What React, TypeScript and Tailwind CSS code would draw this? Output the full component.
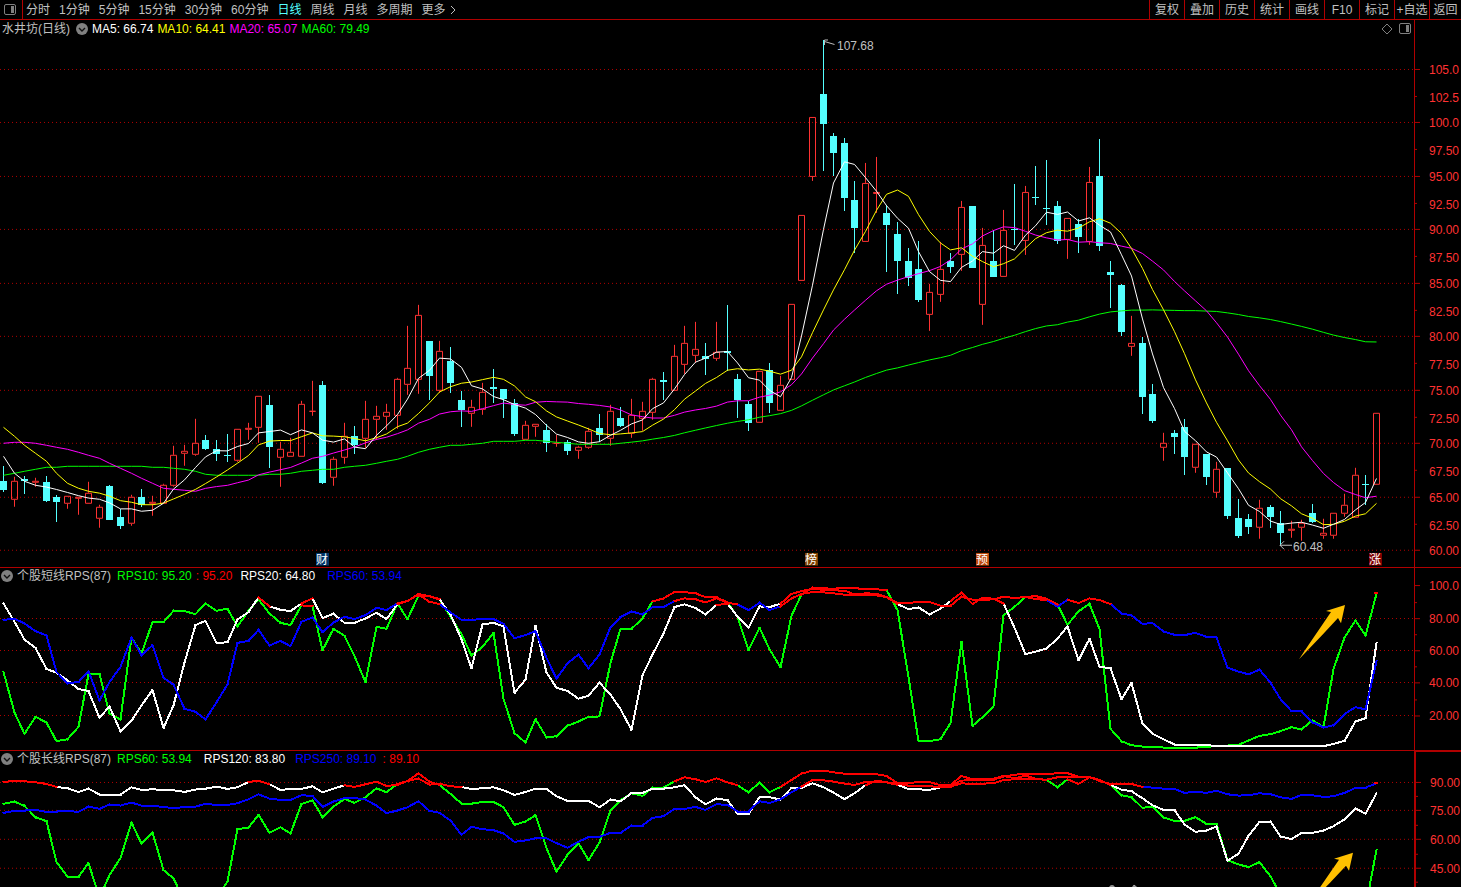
import React from 'react';

type Candle = [kind: 'u' | 'd', high: number, top: number, bottom: number, low: number];

const CHART_WIDTH = 1414;

const candles: Candle[] = [
    ['d', 466, 481, 490, 492], ['u', 477, 481, 500, 507], ['d', 476, 479, 481, 494], ['u', 478, 481, 483, 487],
    ['d', 476, 482, 501, 502], ['d', 495, 497, 502, 522], ['u', 496, 496, 504, 509], ['u', 497, 497, 499, 515],
    ['u', 482, 493, 504, 504], ['u', 505, 507, 519, 528], ['d', 485, 486, 520, 520], ['d', 509, 517, 526, 529],
    ['u', 495, 497, 524, 526], ['d', 489, 497, 505, 507], ['u', 496, 502, 504, 516], ['u', 484, 485, 504, 504],
    ['u', 446, 455, 486, 487], ['u', 445, 451, 454, 466], ['u', 419, 443, 455, 456], ['d', 435, 440, 449, 450],
    ['d', 440, 449, 454, 461], ['d', 434, 455, 456, 462], ['u', 429, 429, 461, 462], ['u', 423, 428, 430, 440],
    ['u', 396, 396, 428, 443], ['d', 395, 405, 447, 468], ['u', 442, 449, 458, 487], ['u', 438, 452, 457, 457],
    ['u', 401, 404, 457, 457], ['u', 381, 411, 412, 416], ['d', 381, 385, 483, 484], ['u', 457, 459, 478, 486],
    ['u', 423, 436, 458, 464], ['d', 426, 436, 445, 454], ['u', 401, 419, 439, 448], ['u', 406, 416, 420, 440],
    ['u', 404, 412, 417, 430], ['u', 378, 379, 416, 429], ['u', 326, 368, 385, 395], ['u', 305, 315, 380, 394],
    ['d', 341, 341, 376, 400], ['u', 341, 351, 391, 393], ['d', 347, 361, 383, 393], ['d', 391, 400, 410, 427],
    ['u', 400, 407, 414, 427], ['u', 383, 392, 410, 415], ['d', 369, 387, 389, 403], ['d', 389, 389, 399, 418],
    ['d', 399, 403, 434, 436], ['u', 421, 425, 440, 440], ['u', 424, 424, 427, 437], ['d', 424, 430, 443, 452],
    ['u', 435, 443, 444, 447], ['d', 440, 442, 451, 455], ['u', 446, 447, 451, 459], ['u', 428, 431, 448, 449],
    ['d', 414, 428, 435, 442], ['u', 405, 411, 439, 446], ['d', 407, 418, 426, 427], ['u', 399, 415, 434, 438],
    ['u', 402, 411, 419, 431], ['u', 378, 379, 413, 420], ['d', 372, 380, 382, 400], ['u', 345, 356, 391, 391],
    ['u', 326, 343, 365, 374], ['u', 322, 349, 356, 363], ['d', 343, 356, 359, 375], ['u', 322, 352, 359, 361],
    ['d', 305, 351, 353, 371], ['d', 374, 379, 400, 418], ['d', 401, 404, 423, 431], ['u', 371, 371, 423, 423],
    ['d', 363, 370, 403, 413], ['u', 376, 385, 411, 411], ['u', 304, 304, 380, 380], ['u', 215, 215, 281, 281],
    ['u', 117, 117, 177, 181], ['d', 40, 94, 124, 171], ['d', 133, 136, 153, 176], ['d', 138, 143, 198, 211],
    ['d', 181, 200, 228, 253], ['u', 163, 183, 242, 242], ['u', 157, 192, 194, 213], ['d', 205, 213, 225, 272],
    ['d', 222, 234, 261, 294], ['d', 248, 261, 278, 286], ['d', 241, 269, 300, 302], ['u', 284, 292, 315, 331],
    ['u', 242, 269, 295, 302], ['d', 253, 261, 267, 273], ['u', 201, 207, 255, 271], ['d', 206, 206, 268, 268],
    ['u', 228, 245, 305, 325], ['d', 230, 261, 277, 277], ['u', 210, 230, 277, 277], ['d', 184, 229, 230, 245],
    ['u', 186, 192, 241, 255], ['d', 166, 197, 198, 205], ['d', 160, 208, 209, 225], ['d', 201, 206, 241, 244],
    ['u', 218, 218, 240, 259], ['d', 219, 224, 237, 253], ['u', 167, 182, 242, 245], ['d', 139, 176, 246, 251],
    ['d', 261, 272, 275, 308], ['d', 284, 285, 332, 336], ['u', 316, 343, 347, 356], ['d', 337, 343, 397, 414],
    ['d', 384, 394, 421, 423], ['u', 433, 443, 448, 461], ['d', 430, 433, 437, 454], ['d', 419, 427, 457, 475],
    ['u', 444, 444, 468, 473], ['d', 454, 454, 477, 485], ['u', 462, 469, 493, 498], ['d', 468, 468, 516, 519],
    ['d', 499, 518, 536, 538], ['d', 514, 519, 527, 534], ['u', 500, 508, 528, 539], ['d', 505, 507, 517, 528],
    ['d', 511, 523, 533, 546], ['u', 521, 529, 531, 538], ['u', 520, 523, 528, 541], ['d', 504, 513, 522, 523],
    ['u', 519, 533, 536, 539], ['u', 513, 513, 536, 539], ['u', 494, 505, 514, 517], ['u', 468, 475, 518, 518],
    ['d', 475, 484, 485, 505], ['u', 413, 413, 485, 485],
];

// averages that reach back before the first visible candle
const ma5Start = [456, 473, 481, 485];
const ma10Start = [427, 436, 445, 453, 461, 473, 483, 488, 491];
const ma20Start = [443, 442, 442, 443, 445, 447, 449, 452, 455, 458, 463, 468, 473, 478, 483, 488, 489, 490, 491];
const ma60Start = [
    475, 473, 471, 469, 467, 467, 466, 466, 466, 466, 466, 466, 466, 466, 467, 467, 468, 469, 471, 474,
    475, 475, 475, 475, 475, 474, 474, 473, 471, 470, 469, 469, 467, 466, 465, 463, 461, 459, 456, 452,
    449, 447, 445, 445, 444, 443, 441, 441, 441, 440, 440, 441, 442, 443, 444, 444, 444, 444, 443,
];

// RPS series, three units per pixel
const shortRps10 = [
    320, 441, 505, 454, 471, 527, 521, 484, 327, 327, 444, 462, 217, 265, 171, 171, 137, 138, 147, 115,
    137, 131, 184, 137, 103, 145, 173, 180, 121, 123, 255, 191, 212, 272, 351, 185, 191, 115, 162, 92,
    94, 102, 155, 207, 271, 245, 203, 400, 503, 531, 461, 516, 512, 481, 468, 454, 453, 293, 191, 191,
    160, 109, 100, 81, 81, 85, 96, 97, 112, 155, 255, 188, 252, 306, 152, 88, 68, 70, 71, 69,
    69, 73, 73, 75, 135, 335, 527, 527, 521, 473, 230, 481, 455, 422, 151, 125, 96, 93, 101, 118,
    179, 139, 116, 192, 490, 527, 539, 543, 543, 546, 546, 546, 546, 545, 540, 540, 538, 525, 511, 506,
    497, 485, 492, 464, 485, 311, 217, 166, 211, 86,
];
const shortRps20 = [
    115, 170, 223, 248, 311, 322, 345, 371, 377, 457, 423, 498, 466, 420, 374, 487, 420, 292, 180, 167,
    234, 231, 163, 141, 97, 124, 134, 138, 115, 100, 159, 146, 173, 173, 160, 143, 162, 117, 108, 87,
    94, 103, 148, 223, 309, 178, 173, 184, 382, 343, 182, 322, 367, 377, 400, 391, 352, 388, 431, 493,
    330, 268, 205, 126, 118, 129, 148, 120, 116, 154, 188, 124, 126, 116, 87, 78, 72, 74, 76, 77,
    88, 85, 86, 96, 117, 132, 127, 148, 131, 108, 83, 117, 98, 101, 115, 188, 267, 259, 250, 220,
    184, 285, 221, 304, 309, 401, 353, 475, 505, 521, 537, 537, 537, 538, 542, 542, 542, 542, 542, 542,
    542, 542, 542, 542, 542, 535, 526, 468, 458, 233,
];
const shortRps60 = [
    164, 161, 175, 198, 211, 320, 354, 350, 318, 405, 350, 305, 217, 270, 240, 337, 358, 430, 439, 462,
    411, 357, 233, 227, 194, 241, 227, 243, 170, 157, 201, 172, 155, 162, 150, 128, 135, 115, 108, 88,
    110, 117, 142, 164, 164, 162, 162, 176, 219, 210, 198, 278, 340, 294, 268, 309, 268, 186, 156, 139,
    148, 126, 126, 108, 100, 103, 112, 100, 113, 118, 135, 113, 135, 124, 100, 87, 81, 82, 85, 89,
    90, 90, 91, 96, 113, 114, 110, 111, 122, 122, 95, 104, 104, 103, 95, 99, 96, 102, 105, 125,
    104, 114, 100, 105, 117, 145, 151, 176, 174, 199, 209, 210, 203, 215, 217, 307, 319, 327, 313, 352,
    401, 437, 438, 470, 486, 479, 446, 425, 432, 288,
];
const longRps60 = [
    717, 710, 723, 757, 769, 892, 936, 936, 895, 1000, 931, 880, 773, 837, 803, 916, 941, 1010, 1020, 1040,
    1000, 950, 793, 788, 750, 804, 787, 806, 717, 706, 757, 725, 702, 714, 697, 670, 682, 657, 648, 625,
    650, 660, 687, 716, 716, 711, 711, 727, 780, 770, 751, 850, 921, 870, 835, 886, 833, 737, 706, 685,
    693, 668, 668, 649, 637, 643, 651, 640, 652, 661, 682, 653, 682, 666, 645, 626, 617, 617, 622, 626,
    627, 627, 628, 633, 655, 655, 651, 651, 661, 660, 633, 643, 641, 641, 633, 640, 632, 641, 645, 667,
    643, 657, 637, 645, 660, 691, 697, 729, 725, 758, 768, 768, 757, 777, 778, 886, 899, 907, 892, 935,
    990, 1040, 1040, 1060, 1080, 1080, 1060, 1040, 1030, 855,
];
const longRps120 = [
    651, 648, 649, 652, 657, 666, 670, 681, 671, 689, 689, 689, 667, 675, 673, 675, 676, 681, 674, 671,
    665, 672, 667, 651, 647, 658, 675, 672, 672, 664, 682, 671, 661, 666, 658, 650, 663, 660, 648, 641,
    659, 656, 664, 666, 672, 670, 667, 676, 690, 681, 671, 672, 694, 708, 708, 708, 727, 704, 709, 685,
    684, 671, 671, 667, 661, 697, 718, 701, 706, 747, 747, 696, 697, 704, 669, 668, 655, 667, 683, 703,
    685, 661, 647, 652, 660, 672, 673, 675, 667, 660, 647, 645, 644, 644, 635, 629, 627, 627, 627, 625,
    625, 635, 636, 645, 660, 674, 679, 700, 721, 735, 736, 779, 801, 797, 785, 888, 867, 813, 771, 770,
    815, 823, 804, 804, 797, 784, 763, 730, 747, 685,
];
const longRps250 = [
    744, 738, 737, 735, 741, 740, 738, 741, 725, 732, 719, 722, 713, 722, 722, 727, 729, 727, 725, 717,
    720, 720, 715, 703, 688, 701, 705, 705, 691, 693, 726, 710, 699, 699, 704, 722, 745, 737, 727, 709,
    738, 744, 767, 810, 786, 793, 796, 806, 831, 827, 821, 820, 835, 849, 831, 817, 816, 804, 804, 782,
    782, 759, 754, 732, 732, 726, 735, 718, 720, 740, 740, 709, 714, 703, 682, 665, 645, 646, 650, 656,
    660, 651, 651, 652, 656, 662, 663, 664, 666, 665, 655, 657, 656, 655, 645, 643, 641, 643, 644, 637,
    635, 636, 636, 648, 657, 657, 657, 666, 668, 671, 672, 684, 680, 684, 677, 688, 692, 691, 685, 688,
    697, 702, 690, 691, 696, 694, 684, 669, 668, 655,
];

const periods = ['分时', '1分钟', '5分钟', '15分钟', '30分钟', '60分钟', '日线', '周线', '月线', '多周期'];
const tools = ['复权', '叠加', '历史', '统计', '画线', 'F10', '标记', '+自选', '返回'];

const badges = [
    { text: '财', x: 316, color: '#003468' },
    { text: '榜', x: 805, color: '#7f3f00' },
    { text: '预', x: 976, color: '#bf4a0c' },
    { text: '涨', x: 1369, color: '#800000' },
];

const xOf = (i: number) => 3.5 + Math.round((i * 1373) / 129);
const percent = (value: number, total: number) => `${(value / total) * 100}%`;

const movingAverage = (span: number, start: number[]) => {
    const closes = candles.map(([kind, , top, bottom]) => (kind === 'u' ? top : bottom));
    return closes.map((_, i) => {
        if (i < span - 1) return start[i];
        return closes.slice(i - span + 1, i + 1).reduce((sum, y) => sum + y, 0) / span;
    });
};

const toPoints = (ys: number[]) => ys.map((y, i) => `${xOf(i)},${y + 0.5}`).join(' ');

const averages = [
    { color: '#00ff00', points: toPoints(movingAverage(60, ma60Start)) },
    { color: '#ff00ff', points: toPoints(movingAverage(20, ma20Start)) },
    { color: '#ffff00', points: toPoints(movingAverage(10, ma10Start)) },
    { color: '#ffffff', points: toPoints(movingAverage(5, ma5Start)) },
];

const Grid = ({ rows }: { rows: number[] }) => (
    <>
        {rows.map((y) => (
            <line key={y} x1="0" x2={CHART_WIDTH} y1={y + 0.5} y2={y + 0.5} stroke="#b00000" strokeDasharray="1 3" />
        ))}
    </>
);

const CandleShape = ({ candle, x }: { candle: Candle; x: number }) => {
    const [kind, high, top, bottom, low] = candle;
    if (kind === 'd') {
        return (
            <g fill="#54ffff">
                <rect x={x - 0.5} y={high} width="1" height={low - high} />
                <rect x={x - 3.5} y={top} width="7" height={bottom - top} />
            </g>
        );
    }
    return (
        <path
            d={`M${x} ${high}V${top}M${x} ${bottom}V${low}M${x - 3} ${top + 0.5}H${x + 3}V${bottom - 0.5}H${x - 3}Z`}
            fill="none"
            stroke="#ff3232"
        />
    );
};

interface RpsLinesProps {
    series: { values: number[]; color: string }[];
    limit: number;
}

// segments where both ends are above the 87 line turn red
const RpsLines = ({ series, limit }: RpsLinesProps) => {
    const segment = (values: number[], i: number) =>
        `M${xOf(i)} ${values[i] / 3}L${xOf(i + 1)} ${values[i + 1] / 3}`;
    const split = series.map(({ values, color }) => {
        let base = '';
        let strong = '';
        for (let i = 0; i < values.length - 1; i++) {
            if (values[i] <= limit && values[i + 1] <= limit) strong += segment(values, i);
            else base += segment(values, i);
        }
        return { color, base, strong };
    });
    return (
        <g fill="none" strokeWidth="2" strokeLinecap="square">
            {split.map((s) => <path key={s.color} d={s.base} stroke={s.color} />)}
            {split.map((s) => <path key={s.color} d={s.strong} stroke="#ff0000" />)}
        </g>
    );
};

const ARROW = '1299,94 1309,79 1331,47 1326,46 1345,40 1341,58 1338,53 1322,70';

interface AxisProps {
    top: number;
    height: number;
    labels: [number, string][];
    halfLabels?: [number, string][];
    minor?: number[];
    className?: string;
}

const Axis = ({ top, height, labels, halfLabels = [], minor = [], className = 'border-l' }: AxisProps) => (
    <svg className={`h-full w-[47px] shrink-0 border-[#b00000] ${className}`} fontSize="12">
        {labels.map(([y, text]) => (
            <React.Fragment key={text}>
                <rect x="0" y={percent(y - top, height)} width="5" height="1" fill="#b00000" />
                <text x="14" y={percent(y - top, height)} dy="5" fill="#ff3232">{text}</text>
            </React.Fragment>
        ))}
        {halfLabels.map(([y, text]) => (
            <React.Fragment key={text}>
                <rect x="0" y={percent(y - top, height)} width="2" height="1" fill="#b00000" />
                <text x="14" y={percent(y - top, height)} dy="6" fill="#ff3232">{text}</text>
            </React.Fragment>
        ))}
        {minor.map((y) => (
            <rect key={y} x="0" y={percent(y - top, height)} width="2" height="1" fill="#b00000" />
        ))}
    </svg>
);

const SplitIcon = () => (
    <svg width="12" height="12" viewBox="0 0 12 12" fill="none">
        <rect x="0.5" y="0.5" width="11" height="10" rx="1.5" stroke="#808080" />
        <rect x="7" y="2" width="3" height="7" fill="#808080" />
    </svg>
);

const CollapseButton = () => (
    <button type="button" aria-label="收起" className="block shrink-0">
        <svg width="12" height="12" viewBox="0 0 12 12">
            <circle cx="6" cy="6" r="6" fill="#808080" />
            <path d="M3 5l3 3 3-3" fill="none" stroke="#101010" strokeWidth="1.4" />
        </svg>
    </button>
);

const Toolbar = () => (
    <header className="flex h-5 shrink-0 items-stretch justify-between border-b border-[#b00000] text-[#c0c0c0]">
        <div className="flex items-stretch">
            <button type="button" aria-label="侧栏" className="flex w-[23px] items-center border-r border-[#b00000] pl-1">
                <SplitIcon />
            </button>
            <nav className="flex items-center gap-[9px] pl-[3px]">
                {periods.map((period) => (
                    <button key={period} type="button" className={period === '日线' ? 'text-[#54ffff]' : ''}>
                        {period}
                    </button>
                ))}
                <button type="button" className="flex items-center gap-1">
                    更多
                    <svg width="6" height="10" viewBox="0 0 6 10" fill="none" stroke="#c0c0c0">
                        <path d="M1 1l4 4-4 4" />
                    </svg>
                </button>
            </nav>
        </div>
        <div className="flex items-stretch">
            {tools.map((tool) => (
                <button key={tool} type="button" className="w-[35px] border-l border-[#b00000] text-center whitespace-nowrap last:w-8">
                    {tool}
                </button>
            ))}
        </div>
    </header>
);

const PricePane = () => (
    <section className="flex min-h-0 flex-[548_1_0%] border-b border-[#b00000]">
        <div className="flex min-w-0 flex-1 flex-col">
            <div className="flex h-[18px] shrink-0 items-center gap-1 pl-0.5">
                <h1 className="pr-0.5 text-[#c0c0c0]">水井坊(日线)</h1>
                <CollapseButton />
                <span className="text-white">MA5: 66.74</span>
                <span className="text-[#ffff00]">MA10: 64.41</span>
                <span className="text-[#ff00ff]">MA20: 65.07</span>
                <span className="text-[#00ff00]">MA60: 79.49</span>
                <div className="ml-auto flex items-center gap-1.5 pr-[3px]">
                    <button type="button" aria-label="标记点">
                        <svg width="12" height="12" viewBox="0 0 12 12" fill="none" stroke="#808080">
                            <path d="M6 1l5 5-5 5-5-5z" />
                        </svg>
                    </button>
                    <button type="button" aria-label="分栏">
                        <SplitIcon />
                    </button>
                </div>
            </div>
            <svg className="min-h-0 w-full flex-1" fontSize="12">
                <svg width="100%" height="100%" viewBox="0 38 1414 529" preserveAspectRatio="none" shapeRendering="crispEdges">
                    <Grid rows={[69, 122, 176, 229, 283, 336, 390, 443, 497, 550]} />
                    {candles.map((candle, i) => <CandleShape key={i} candle={candle} x={xOf(i)} />)}
                    {averages.map((line) => (
                        <polyline key={line.color} points={line.points} fill="none" stroke={line.color} />
                    ))}
                    <path d="M834.5 44.5L824.5 41.5M828 40H824.5V45" fill="none" stroke="#c0c0c0" />
                    <path d="M1292 545.5H1280M1284 541.5L1280 545.5L1284 549.5" fill="none" stroke="#c0c0c0" />
                </svg>
                <text x={percent(837, CHART_WIDTH)} y={percent(50 - 38, 529)} fill="#c0c0c0">107.68</text>
                <text x={percent(1293, CHART_WIDTH)} y={percent(551 - 38, 529)} fill="#c0c0c0">60.48</text>
                {badges.map((badge) => (
                    <svg key={badge.text} x={percent(badge.x, CHART_WIDTH)} y={percent(553 - 38, 529)} width="13" height="13">
                        <rect width="13" height="13" fill={badge.color} />
                        <text x="0" y="11" fill="#ffffff">{badge.text}</text>
                    </svg>
                ))}
            </svg>
        </div>
        <Axis
            top={20}
            height={547}
            labels={[
                [69, '105.0'], [122, '100.0'], [176, '95.00'], [229, '90.00'], [283, '85.00'],
                [336, '80.00'], [390, '75.00'], [443, '70.00'], [497, '65.00'], [550, '60.00'],
            ]}
            halfLabels={[
                [96, '102.5'], [149, '97.50'], [203, '92.50'], [256, '87.50'], [310, '82.50'],
                [363, '77.50'], [417, '72.50'], [470, '67.50'], [524, '62.50'],
            ]}
        />
    </section>
);

const ShortRpsPane = () => (
    <section className="flex min-h-0 flex-[183_1_0%] border-b border-[#b00000]">
        <div className="flex min-w-0 flex-1 flex-col">
            <div className="flex h-4 shrink-0 items-center gap-1 pl-px">
                <CollapseButton />
                <h2 className="pr-0.5 text-[#c0c0c0]">个股短线RPS(87)</h2>
                <span className="text-[#00ff00]">RPS10: 95.20</span>
                <span className="pr-1 text-[#ff0000]">: 95.20</span>
                <span className="pr-2 text-white">RPS20: 64.80</span>
                <span className="text-[#0000ff]">RPS60: 53.94</span>
            </div>
            <svg
                className="min-h-0 w-full flex-1"
                viewBox="0 19 1414 166"
                preserveAspectRatio="none"
                shapeRendering="crispEdges"
            >
                <Grid rows={[53, 85, 117, 150]} />
                <RpsLines
                    series={[
                        { values: shortRps10, color: '#00ff00' },
                        { values: shortRps20, color: '#ffffff' },
                        { values: shortRps60, color: '#0000ff' },
                    ]}
                    limit={124}
                />
                <rect x="1374" y="27" width="4" height="2" fill="#ff0000" />
                <polygon points={ARROW} fill="#ffc000" shapeRendering="auto" />
            </svg>
        </div>
        <Axis
            top={568}
            height={182}
            labels={[[585, '100.0'], [618, '80.00'], [650, '60.00'], [682, '40.00'], [715, '20.00']]}
            minor={[602, 634, 666, 699]}
        />
    </section>
);

const LongRpsPane = () => (
    <section className="flex min-h-0 flex-[136_1_0%]">
        <div className="flex min-w-0 flex-1 flex-col">
            <div className="flex h-4 shrink-0 items-center gap-1 pl-px">
                <CollapseButton />
                <h2 className="pr-0.5 text-[#c0c0c0]">个股长线RPS(87)</h2>
                <span className="pr-2 text-[#00ff00]">RPS60: 53.94</span>
                <span className="pr-1.5 text-white">RPS120: 83.80</span>
                <span className="pr-0.5 text-[#0000ff]">RPS250: 89.10</span>
                <span className="text-[#ff0000]">: 89.10</span>
            </div>
            <svg
                className="min-h-0 w-full flex-1"
                viewBox="0 202 1414 120"
                preserveAspectRatio="none"
                shapeRendering="crispEdges"
            >
                <Grid rows={[217, 245, 274, 303]} />
                <RpsLines
                    series={[
                        { values: longRps60, color: '#00ff00' },
                        { values: longRps120, color: '#ffffff' },
                        { values: longRps250, color: '#0000ff' },
                    ]}
                    limit={666}
                />
                <rect x="1374" y="217" width="4" height="2" fill="#ff0000" />
                <polygon points={ARROW} transform="translate(8 248)" fill="#ffc000" shapeRendering="auto" />
                <path d="M1109 322q3-3 6 0zM1132 322l2-2 3 2z" fill="#c0c0c0" shapeRendering="auto" />
            </svg>
        </div>
        <Axis
            top={752}
            height={135}
            labels={[[782, '90.00'], [810, '75.00'], [839, '60.00'], [868, '45.00']]}
            minor={[796, 825, 854, 882]}
            className="border-t border-l-2"
        />
    </section>
);

const App = () => {
    return (
        <main className="flex h-screen flex-col overflow-hidden bg-black font-['Liberation_Sans','Noto_Sans_CJK_SC',sans-serif] text-[12px] leading-4">
            <Toolbar />
            <PricePane />
            <ShortRpsPane />
            <LongRpsPane />
        </main>
    );
};

export default App;
